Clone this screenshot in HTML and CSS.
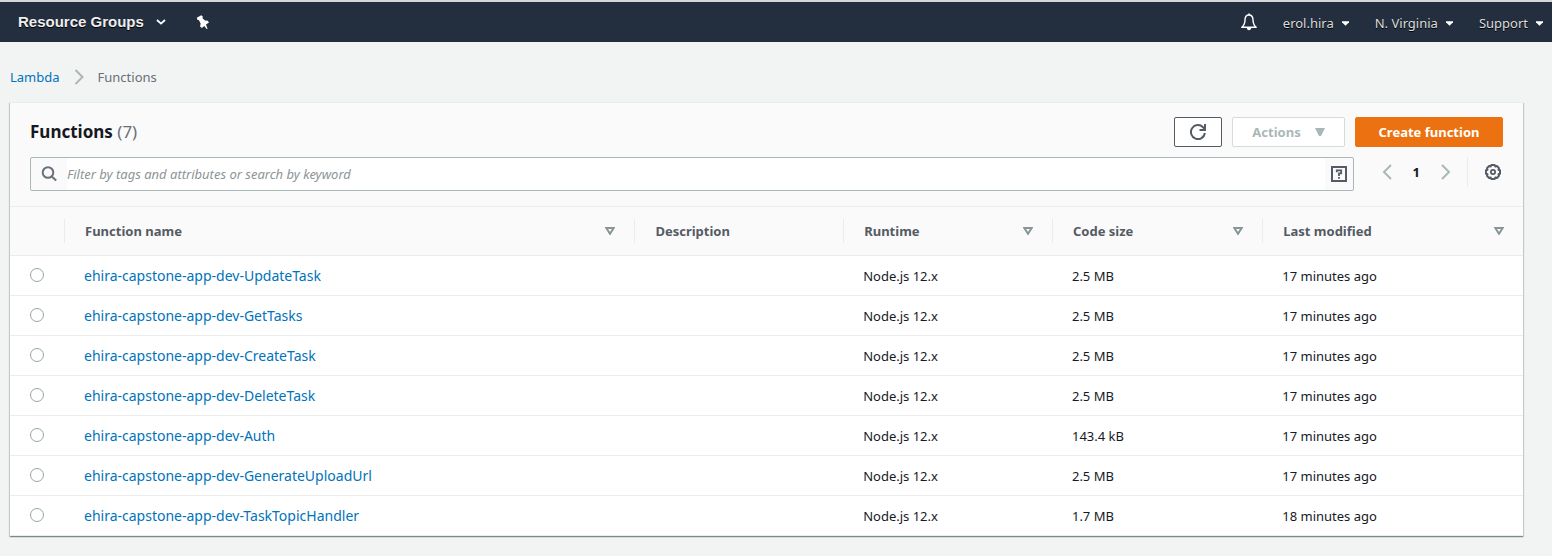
FILE: index.html
```html
<!DOCTYPE html>
<html lang="en">
<head>
<meta charset="utf-8">
<title>Functions - Lambda</title>
<link rel="stylesheet" href="styles.css">
</head>
<body>
<header class="topbar">
  <nav class="topbar-group" aria-label="Services">
    <button class="groups" type="button">Resource Groups
      <svg class="chevron" viewBox="0 0 10 6" aria-hidden="true"><path d="M1 1l4 3.600L9 1" fill="none" stroke="#fff" stroke-width="1.800"/></svg>
    </button>
    <button class="icon-button" type="button" aria-label="Pin shortcuts">
      <svg class="pin" viewBox="0 0 14 14" aria-hidden="true"><path d="M.8 2.800L5.200.2 6.800 1.600 6.500 3.200 9 5.600 11.800 5.800 13 7.600 10 9.400 11.600 13.900 10.700 14 8.300 11 5.800 13 4 11.300 4.700 8.800 3 5.200 1.400 4.800z" fill="#fff"/></svg>
    </button>
  </nav>
  <nav class="topbar-group account" aria-label="Account">
    <button class="icon-button" type="button" aria-label="Notifications">
      <svg class="bell" viewBox="0 0 16 18" aria-hidden="true"><path d="M8 2C5.300 2 4 4.300 4 7c0 4-1 5.500-3.200 7.200h14.400C13 12.500 12 11 12 7c0-2.700-1.300-5-4-5z" fill="none" stroke="#fff" stroke-width="1.400" stroke-linejoin="round"/><path d="M7.200.5h1.600V2H7.200zM5.800 14.800h4.400c0 1.600-.9 2.500-2.200 2.500s-2.200-.9-2.200-2.500z" fill="#fff"/></svg>
    </button>
    <button class="menu" type="button">erol.hira <svg class="caret" viewBox="0 0 8 5" aria-hidden="true"><path d="M0 0h8v1L4 5 0 1z" fill="#fff"/></svg></button>
    <button class="menu" type="button">N. Virginia <svg class="caret" viewBox="0 0 8 5" aria-hidden="true"><path d="M0 0h8v1L4 5 0 1z" fill="#fff"/></svg></button>
    <button class="menu" type="button">Support <svg class="caret" viewBox="0 0 8 5" aria-hidden="true"><path d="M0 0h8v1L4 5 0 1z" fill="#fff"/></svg></button>
  </nav>
</header>
<main class="page">
  <nav class="breadcrumb" aria-label="Breadcrumb">
    <a href="#lambda">Lambda</a>
    <svg class="crumb-arrow" viewBox="0 0 10 16" aria-hidden="true"><path d="M1.500 1l7 7-7 7" fill="none" stroke="#aab7b8" stroke-width="2"/></svg>
    <span>Functions</span>
  </nav>
  <section class="panel">
    <div class="panel-head">
      <div class="title-row">
        <h1>Functions <span class="count">(7)</span></h1>
        <div class="buttons">
          <button class="btn refresh" type="button" aria-label="Refresh">
            <svg class="icon" viewBox="0 0 16 16" aria-hidden="true"><path d="M14.900 9A7 7 0 1 1 13 3.200L14.500 5M15 0v6H9.500" fill="none" stroke="#545b64" stroke-width="2"/></svg>
          </button>
          <button class="btn actions" type="button" disabled>Actions
            <svg class="actions-caret" viewBox="0 0 10 8" aria-hidden="true"><path d="M0 0h10L6 8H4z" fill="#aab7b8"/></svg>
          </button>
          <button class="btn primary" type="button">Create function</button>
        </div>
      </div>
      <div class="filter-row">
        <div class="search">
          <label class="search-icon" for="filter"><svg class="icon" viewBox="0 0 16 16" role="img" aria-label="Filter functions"><circle cx="7" cy="6.500" r="5.300" fill="none" stroke="#687078" stroke-width="2"/><path d="M10.700 10.500l4.500 4" stroke="#687078" stroke-width="2"/></svg></label>
          <input id="filter" type="text" placeholder="Filter by tags and attributes or search by keyword">
          <button class="help" type="button" aria-label="Help">
            <svg class="icon" viewBox="0 0 16 16" aria-hidden="true"><path d="M1 1h14v14H1z" fill="none" stroke="#545b64" stroke-width="2"/><path d="M5.800 6.300V4.400h4.400v3H8V10" fill="none" stroke="#545b64" stroke-width="1.800"/><path d="M7.100 11h1.800v1.800H7.100z" fill="#545b64"/></svg>
          </button>
        </div>
        <div class="pager">
          <button class="icon-button" type="button" aria-label="Previous page"><svg class="page-arrow" viewBox="0 0 10 16" aria-hidden="true"><path d="M9 1L2 8l7 7" fill="none" stroke="#aab7b8" stroke-width="2"/></svg></button>
          <button class="icon-button page-number" type="button">1</button>
          <button class="icon-button" type="button" aria-label="Next page"><svg class="page-arrow" viewBox="0 0 10 16" aria-hidden="true"><path d="M1 1l7 7-7 7" fill="none" stroke="#aab7b8" stroke-width="2"/></svg></button>
        </div>
        <div class="settings">
          <button class="icon-button" type="button" aria-label="Preferences"><svg class="icon" viewBox="0 0 16 16" aria-hidden="true"><path d="M6.300 1h3.400l.6 1.500 1.600-.5 2.100 2.100-.5 1.600 1.500.6v3.400l-1.500.6.5 1.600-2.100 2.100-1.600-.5-.6 1.500H6.300l-.6-1.500-1.600.5L2 11.900l.5-1.600L1 9.700V6.300l1.500-.6L2 4.100 4.100 2l1.600.5z" fill="none" stroke="#545b64" stroke-width="2" stroke-linejoin="round"/><circle cx="8" cy="8" r="2.100" fill="none" stroke="#545b64" stroke-width="1.800"/></svg></button>
        </div>
      </div>
    </div>
    <table class="functions">
      <colgroup><col class="col-select"><col class="col-name"><col class="col-description"><col class="col-runtime"><col class="col-size"><col></colgroup>
      <thead>
        <tr>
          <td></td>
          <th scope="col"><div class="heading">Function name <svg class="sort" viewBox="0 0 10 8" aria-hidden="true"><path d="M1.300 1h7.400L5 6.800z" fill="none" stroke="#879596" stroke-width="2"/></svg></div></th>
          <th scope="col"><div class="heading">Description</div></th>
          <th scope="col"><div class="heading">Runtime <svg class="sort" viewBox="0 0 10 8" aria-hidden="true"><path d="M1.300 1h7.400L5 6.800z" fill="none" stroke="#879596" stroke-width="2"/></svg></div></th>
          <th scope="col"><div class="heading">Code size <svg class="sort" viewBox="0 0 10 8" aria-hidden="true"><path d="M1.300 1h7.400L5 6.800z" fill="none" stroke="#879596" stroke-width="2"/></svg></div></th>
          <th scope="col"><div class="heading">Last modified <svg class="sort" viewBox="0 0 10 8" aria-hidden="true"><path d="M1.300 1h7.400L5 6.800z" fill="none" stroke="#879596" stroke-width="2"/></svg></div></th>
        </tr>
      </thead>
      <tbody>
        <tr><td><input type="radio" name="fn" aria-label="Select UpdateTask"></td><td><a href="#UpdateTask">ehira-capstone-app-dev-UpdateTask</a></td><td></td><td>Node.js 12.x</td><td>2.5 MB</td><td>17 minutes ago</td></tr>
        <tr><td><input type="radio" name="fn" aria-label="Select GetTasks"></td><td><a href="#GetTasks">ehira-capstone-app-dev-GetTasks</a></td><td></td><td>Node.js 12.x</td><td>2.5 MB</td><td>17 minutes ago</td></tr>
        <tr><td><input type="radio" name="fn" aria-label="Select CreateTask"></td><td><a href="#CreateTask">ehira-capstone-app-dev-CreateTask</a></td><td></td><td>Node.js 12.x</td><td>2.5 MB</td><td>17 minutes ago</td></tr>
        <tr><td><input type="radio" name="fn" aria-label="Select DeleteTask"></td><td><a href="#DeleteTask">ehira-capstone-app-dev-DeleteTask</a></td><td></td><td>Node.js 12.x</td><td>2.5 MB</td><td>17 minutes ago</td></tr>
        <tr><td><input type="radio" name="fn" aria-label="Select Auth"></td><td><a href="#Auth">ehira-capstone-app-dev-Auth</a></td><td></td><td>Node.js 12.x</td><td>143.4 kB</td><td>17 minutes ago</td></tr>
        <tr><td><input type="radio" name="fn" aria-label="Select GenerateUploadUrl"></td><td><a href="#GenerateUploadUrl">ehira-capstone-app-dev-GenerateUploadUrl</a></td><td></td><td>Node.js 12.x</td><td>2.5 MB</td><td>17 minutes ago</td></tr>
        <tr><td><input type="radio" name="fn" aria-label="Select TaskTopicHandler"></td><td><a href="#TaskTopicHandler">ehira-capstone-app-dev-TaskTopicHandler</a></td><td></td><td>Node.js 12.x</td><td>1.7 MB</td><td>18 minutes ago</td></tr>
      </tbody>
    </table>
  </section>
</main>
</body>
</html>
```
FILE: styles.css
```css
* { box-sizing: border-box; }
body {
  margin: 0;
  background: #f2f3f3;
  color: #16191f;
  font: 13px/20px "Noto Sans", sans-serif;
}
button { font: inherit; margin: 0; cursor: pointer; }
svg { display: block; flex: none; }
a { color: #0073bb; text-decoration: none; }

.topbar {
  display: flex;
  justify-content: space-between;
  height: 42px;
  padding: 0 9px 0 18px;
  border-top: 2px solid #d5d8d9;
  background: #232f3e;
}
.topbar-group { display: flex; align-items: center; gap: 30px; }
.account { gap: 26px; }
.topbar button, .icon-button {
  display: flex;
  align-items: center;
  padding: 0;
  border: 0;
  background: none;
}
.topbar button { color: #eee; text-shadow: 0 1px 0 #000; }
.topbar .groups { gap: 12px; font: bold 15px/20px "Liberation Sans", sans-serif; }
.topbar .menu { gap: 8px; padding-top: 2px; color: #ddd; }
.chevron { width: 10px; height: 6px; }
.pin { width: 14px; height: 14px; }
.bell { width: 16px; height: 18px; }
.caret { width: 7px; height: 5px; }

.page { padding: 25px 29px 20px 10px; }
.breadcrumb {
  display: flex;
  align-items: center;
  gap: 14px;
  padding-bottom: 15px;
  color: #687078;
}
.crumb-arrow { width: 10px; height: 16px; }

.panel {
  border-top: 1px solid #eaeded;
  background: #fff;
  box-shadow: 0 1px 1px 0 rgba(0, 28, 36, .3), 1px 1px 1px 0 rgba(0, 28, 36, .15), -1px 1px 1px 0 rgba(0, 28, 36, .15);
}
.panel-head {
  padding: 14px 20px 15px;
  background: #fafafa;
  border-bottom: 1px solid #eaeded;
}
.title-row { display: flex; justify-content: space-between; }
h1 { margin: 0; font-size: 17px; line-height: 30px; }
.count { color: #687078; font-weight: 400; }
.buttons { display: flex; gap: 10px; }
.btn {
  display: flex;
  align-items: center;
  justify-content: center;
  height: 30px;
  padding: 0 20px;
  border: 1px solid #545b64;
  border-radius: 2px;
  background: #fff;
  font-weight: 700;
}
.refresh { width: 48px; }
.actions { width: 113px; gap: 14px; border-color: #d5dbdb; color: #aab7b8; }
.primary { width: 148px; border-color: #ec7211; background: #ec7211; color: #fff; }
.actions-caret { width: 10px; height: 8px; }
.icon { width: 16px; height: 16px; }

.filter-row { display: flex; padding-top: 10px; }
.search {
  display: flex;
  flex: 1;
  height: 34px;
  border: 1px solid #aab7b8;
  border-radius: 2px;
}
.search-icon { display: flex; align-items: center; padding: 0 10px; }
.search input {
  flex: 1;
  min-width: 0;
  padding: 0;
  border: 0;
  background: #fff;
  color: #16191f;
  font: inherit;
}
.search input::placeholder { color: #8d9496; font-style: italic; opacity: 1; }
.help { display: flex; align-items: center; padding: 0 6px; border: 0; background: none; }
.pager { display: flex; align-items: center; gap: 21px; height: 30px; padding: 0 16px 0 28px; }
.page-arrow { width: 10px; height: 16px; }
.page-number { color: #16191f; font-weight: 700; }
.settings {
  display: flex;
  align-items: center;
  height: 30px;
  padding: 0 2px 0 17px;
  border-left: 1px solid #eaeded;
}

.functions { width: 100%; border-collapse: collapse; table-layout: fixed; }
.col-select { width: 54px; }
.col-name { width: 37.7%; }
.col-description { width: 13.8%; }
.col-runtime { width: 13.8%; }
.col-size { width: 13.9%; }
thead { background: #fafafa; }
thead td, thead th { height: 48px; padding: 0; }
th { text-align: left; color: #545b64; }
.heading {
  display: flex;
  align-items: center;
  justify-content: space-between;
  height: 24px;
  padding: 0 19px 0 20px;
  border-left: 1px solid #eaeded;
}
.sort { width: 10px; height: 8px; }
tbody td { height: 40px; padding: 2px 20px 0; border-top: 1px solid #eaeded; }
tbody td:first-child { padding: 0 0 0 20px; }
tbody tr:last-child td { border-bottom: 1px solid #eaeded; }
tbody a { font-size: 14px; }
input[type="radio"] {
  display: block;
  width: 14px;
  height: 14px;
  margin: 0;
  appearance: none;
  border: 1px solid #95a5a6;
  border-radius: 50%;
  background: #fff;
}
input[type="radio"]:checked { border: 4px solid #0073bb; }
```
